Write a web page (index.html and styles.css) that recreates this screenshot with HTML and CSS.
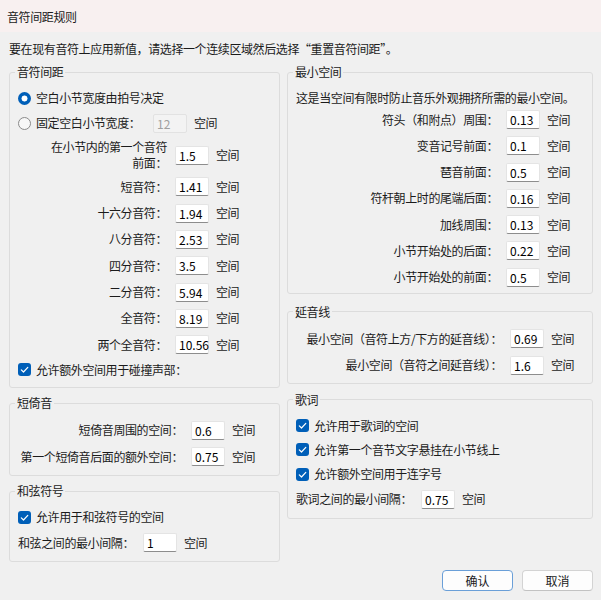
FILE: index.html
```html
<!DOCTYPE html>
<html lang="zh-CN">
<head>
<meta charset="utf-8">
<title>音符间距规则</title>
<link rel="stylesheet" href="styles.css">
</head>
<body>
<div class="window">
  <div class="titlebar">音符间距规则</div>
  <div class="content">
    <p class="intro">要在现有音符上应用新值，请选择一个连续区域然后选择“重置音符间距”。</p>
    <div class="columns">
      <div class="col">
        <fieldset class="group">
          <legend>音符间距</legend>
          <div class="stack">
            <div class="choice"><span class="radio on"></span><span>空白小节宽度由拍号决定</span></div>
            <div class="choice row"><span class="radio"></span><span>固定空白小节宽度：</span><span class="field disabled fixed">12</span><span class="unit">空间</span></div>
            <div class="row tall"><span class="lbl w149 two">在小节内的第一个音符<br>前面：</span><span class="field">1.5</span><span class="unit">空间</span></div>
            <div class="row"><span class="lbl w149">短音符：</span><span class="field">1.41</span><span class="unit">空间</span></div>
            <div class="row"><span class="lbl w149">十六分音符：</span><span class="field">1.94</span><span class="unit">空间</span></div>
            <div class="row"><span class="lbl w149">八分音符：</span><span class="field">2.53</span><span class="unit">空间</span></div>
            <div class="row"><span class="lbl w149">四分音符：</span><span class="field">3.5</span><span class="unit">空间</span></div>
            <div class="row"><span class="lbl w149">二分音符：</span><span class="field">5.94</span><span class="unit">空间</span></div>
            <div class="row"><span class="lbl w149">全音符：</span><span class="field">8.19</span><span class="unit">空间</span></div>
            <div class="row"><span class="lbl w149">两个全音符：</span><span class="field">10.56</span><span class="unit">空间</span></div>
            <div class="choice"><span class="check"><svg viewBox="0 0 13 13" width="13" height="13"><path d="M3.3 6.8 L5.5 9 L9.8 4.4" fill="none" stroke="#fff" stroke-width="1.2" stroke-linecap="round" stroke-linejoin="round"/></svg></span><span>允许额外空间用于碰撞声部：</span></div>
          </div>
        </fieldset>
        <fieldset class="group gap7">
          <legend>短倚音</legend>
          <div class="stack">
            <div class="row"><span class="lbl w165">短倚音周围的空间：</span><span class="field">0.6</span><span class="unit">空间</span></div>
            <div class="row"><span class="lbl w165">第一个短倚音后面的额外空间：</span><span class="field">0.75</span><span class="unit">空间</span></div>
          </div>
        </fieldset>
        <fieldset class="group gap7">
          <legend>和弦符号</legend>
          <div class="stack">
            <div class="choice"><span class="check"><svg viewBox="0 0 13 13" width="13" height="13"><path d="M3.3 6.8 L5.5 9 L9.8 4.4" fill="none" stroke="#fff" stroke-width="1.2" stroke-linecap="round" stroke-linejoin="round"/></svg></span><span>允许用于和弦符号的空间</span></div>
            <div class="row"><span class="lbl free">和弦之间的最小间隔：</span><span class="field">1</span><span class="unit">空间</span></div>
          </div>
        </fieldset>
      </div>
      <div class="col">
        <fieldset class="group pb6">
          <legend>最小空间</legend>
          <div class="stack">
            <p class="desc">这是当空间有限时防止音乐外观拥挤所需的最小空间。</p>
            <div class="row"><span class="lbl w202">符头（和附点）周围：</span><span class="field">0.13</span><span class="unit">空间</span></div>
            <div class="row"><span class="lbl w202">变音记号前面：</span><span class="field">0.1</span><span class="unit">空间</span></div>
            <div class="row"><span class="lbl w202">琶音前面：</span><span class="field">0.5</span><span class="unit">空间</span></div>
            <div class="row"><span class="lbl w202">符杆朝上时的尾端后面：</span><span class="field">0.16</span><span class="unit">空间</span></div>
            <div class="row"><span class="lbl w202">加线周围：</span><span class="field">0.13</span><span class="unit">空间</span></div>
            <div class="row"><span class="lbl w202">小节开始处的后面：</span><span class="field">0.22</span><span class="unit">空间</span></div>
            <div class="row"><span class="lbl w202">小节开始处的前面：</span><span class="field">0.5</span><span class="unit">空间</span></div>
          </div>
        </fieldset>
        <fieldset class="group gap10 pb8">
          <legend>延音线</legend>
          <div class="stack">
            <div class="row"><span class="lbl w206">最小空间（音符上方/下方的延音线）：</span><span class="field">0.69</span><span class="unit">空间</span></div>
            <div class="row"><span class="lbl w206">最小空间（音符之间延音线）：</span><span class="field">1.6</span><span class="unit">空间</span></div>
          </div>
        </fieldset>
        <fieldset class="group gap8">
          <legend>歌词</legend>
          <div class="stack">
            <div class="choice"><span class="check"><svg viewBox="0 0 13 13" width="13" height="13"><path d="M3.3 6.8 L5.5 9 L9.8 4.4" fill="none" stroke="#fff" stroke-width="1.2" stroke-linecap="round" stroke-linejoin="round"/></svg></span><span>允许用于歌词的空间</span></div>
            <div class="choice"><span class="check"><svg viewBox="0 0 13 13" width="13" height="13"><path d="M3.3 6.8 L5.5 9 L9.8 4.4" fill="none" stroke="#fff" stroke-width="1.2" stroke-linecap="round" stroke-linejoin="round"/></svg></span><span>允许第一个音节文字悬挂在小节线上</span></div>
            <div class="choice"><span class="check"><svg viewBox="0 0 13 13" width="13" height="13"><path d="M3.3 6.8 L5.5 9 L9.8 4.4" fill="none" stroke="#fff" stroke-width="1.2" stroke-linecap="round" stroke-linejoin="round"/></svg></span><span>允许额外空间用于连字号</span></div>
            <div class="row"><span class="lbl free">歌词之间的最小间隔：</span><span class="field">0.75</span><span class="unit">空间</span></div>
          </div>
        </fieldset>
      </div>
    </div>
    <div class="buttons">
      <button class="btn primary">确认</button>
      <button class="btn">取消</button>
    </div>
  </div>
</div>
</body>
</html>
```

FILE: styles.css
```css
* { box-sizing: border-box; }
html, body { margin: 0; padding: 0; }
body {
  width: 601px;
  height: 600px;
  overflow: hidden;
  background: #f0f0f0;
  font-family: "Noto Sans CJK SC", "Noto Sans", sans-serif;
  font-size: 12px;
  line-height: 16px;
  color: #1b1b1b;
  letter-spacing: -0.4px;
}
.window {
  width: 601px;
  height: 600px;
  display: flex;
  flex-direction: column;
}
.titlebar {
  height: 32px;
  flex: none;
  background: #f8f0f0;
  padding: 9px 0 0 7px;
}
.content {
  flex: 1;
  display: flex;
  flex-direction: column;
  padding: 0 8px 0 9px;
}
.intro { margin: 9px 0 7px; }
.columns {
  display: grid;
  grid-template-columns: 271px 306px;
  column-gap: 7px;
  align-items: start;
}
.col { display: flex; flex-direction: column; }
.group {
  margin: 0;
  min-width: 0;
  border: 1px solid #dcdcdc;
  border-radius: 3px;
  padding: 9.5px 8px 9px;
}
.group legend {
  padding: 0 2px;
  margin-left: -3px;
  line-height: 16px;
}
.gap7 { margin-top: 7px; }
.gap8 { margin-top: 8px; }
.gap10 { margin-top: 10px; }
.pb6 { padding-bottom: 6px; }
.pb8 { padding-bottom: 8px; }
.stack {
  display: flex;
  flex-direction: column;
  gap: 7.3px;
}
.desc { margin: 0 0 -2.8px; }
.row {
  display: flex;
  align-items: center;
  height: 19px;
}
.row.tall { height: auto; margin: -1px 0; }
.choice {
  display: flex;
  align-items: center;
  min-height: 17px;
}
.lbl {
  flex: none;
  text-align: right;
  margin-right: 8px;
}
.lbl.two { line-height: 16px; }
.lbl.free { text-align: left; margin-right: 9px; }
.w149 { width: 149px; }
.w165 { width: 165px; }
.w202 { width: 202px; }
.w206 { width: 206px; }
.field {
  flex: none;
  width: 34px;
  height: 19px;
  background: #ffffff;
  border: 1px solid #e4e4e4;
  border-bottom-color: #8d8d8d;
  border-radius: 2px;
  padding-left: 3px;
  line-height: 17px;
  letter-spacing: 0;
  color: #000;
}
.field.disabled {
  background: #f3f3f3;
  border-color: #e2e2e2;
  color: #a0a0a0;
}
.field.fixed { margin-left: 12.6px; }
.unit { margin-left: 7px; }
.radio {
  flex: none;
  width: 13px;
  height: 13px;
  border-radius: 50%;
  border: 1px solid #8a8a8a;
  background: #f7f7f7;
  margin-right: 5px;
}
.radio.on {
  border: none;
  background: radial-gradient(circle, #ffffff 0 2.7px, #005fb8 3.3px);
}
.check {
  flex: none;
  width: 13px;
  height: 13px;
  border-radius: 3px;
  background: #005fb8;
  margin-right: 5px;
  display: flex;
}
.buttons {
  display: flex;
  justify-content: flex-end;
  gap: 9px;
  margin-top: 8px;
}
.btn {
  width: 71px;
  height: 21px;
  padding: 0;
  font: inherit;
  line-height: 19px;
  letter-spacing: 0;
  color: #1b1b1b;
  background: #fdfdfd;
  border: 1px solid #d3d3d3;
  border-bottom-color: #c2c2c2;
  border-radius: 4px;
}
.btn.primary { border-color: #6a9fd8; }
```
